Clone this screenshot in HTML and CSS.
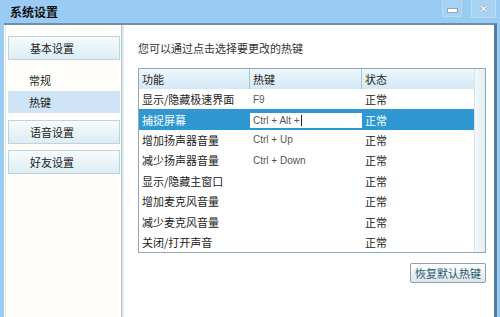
FILE: index.html
```html
<!DOCTYPE html>
<html lang="zh-CN">
  <head>
    <meta charset="UTF-8" />
    <title>系统设置</title>
    <link rel="stylesheet" href="styles.css">
  </head>
  <body>
    <div class="window">
      <div class="titlebar">
        <span class="title">系统设置</span>
        <div class="controls">
          <span class="btn btn-min"><span class="bar"></span></span>
          <span class="btn btn-close">✕</span>
        </div>
      </div>

      <div class="frame">
        <div class="sidebar">
          <div class="group">基本设置</div>
          <div class="item">常规</div>
          <div class="item active">热键</div>
          <div class="group">语音设置</div>
          <div class="group">好友设置</div>
        </div>

        <div class="content">
          <p class="hint">您可以通过点击选择要更改的热键</p>

          <div class="table">
            <div class="grid">
              <div class="row head">
                <div class="cell">功能</div>
                <div class="cell">热键</div>
                <div class="cell">状态</div>
              </div>
              <div class="row">
                <div class="cell">显示/隐藏极速界面</div>
                <div class="cell key">F9</div>
                <div class="cell">正常</div>
              </div>
              <div class="row selected">
                <div class="cell">捕捉屏幕</div>
                <div class="cell key"><span class="edit">Ctrl + Alt + <span class="caret"></span></span></div>
                <div class="cell">正常</div>
              </div>
              <div class="row">
                <div class="cell">增加扬声器音量</div>
                <div class="cell key">Ctrl + Up</div>
                <div class="cell">正常</div>
              </div>
              <div class="row">
                <div class="cell">减少扬声器音量</div>
                <div class="cell key">Ctrl + Down</div>
                <div class="cell">正常</div>
              </div>
              <div class="row">
                <div class="cell">显示/隐藏主窗口</div>
                <div class="cell key"></div>
                <div class="cell">正常</div>
              </div>
              <div class="row">
                <div class="cell">增加麦克风音量</div>
                <div class="cell key"></div>
                <div class="cell">正常</div>
              </div>
              <div class="row">
                <div class="cell">减少麦克风音量</div>
                <div class="cell key"></div>
                <div class="cell">正常</div>
              </div>
              <div class="row">
                <div class="cell">关闭/打开声音</div>
                <div class="cell key"></div>
                <div class="cell">正常</div>
              </div>
            </div>
            <div class="scrollbar"></div>
          </div>

          <div class="actions">
            <button class="reset">恢复默认热键</button>
          </div>
        </div>
      </div>
    </div>
  </body>
</html>
```

FILE: styles.css
```css
:root {
  --sky: #99cbf3;
  --frame-dark: #5a7b98;
  --select: #2f98d3;
  --text: #222;
}

body {
  margin: 0;
  font-family: "Noto Sans CJK SC", "Noto Sans", sans-serif;
  font-size: 11px;
  color: var(--text);
}

.window {
  width: 500px;
  height: 317px;
  background: var(--sky);
  display: flex;
  flex-direction: column;
  overflow: hidden;
}

/* Title bar */
.titlebar {
  height: 23px;
  flex-shrink: 0;
  display: flex;
  align-items: center;
  justify-content: space-between;
  padding-left: 10px;
}

.title {
  font-size: 12px;
  font-weight: bold;
  color: #111;
}

.controls {
  align-self: flex-start;
  display: flex;
  gap: 9px;
  margin-right: 4px;
}

.btn {
  display: flex;
  align-items: center;
  justify-content: center;
  background: #a8d2f1;
  border: 1px solid #b9dcf5;
  border-top: none;
}

.btn-min {
  width: 18px;
  height: 16px;
}

.btn-min .bar {
  width: 9px;
  height: 3px;
  margin-top: 4px;
  background: #fff;
  box-shadow: 0 0 0 1px #8aa8bf;
}

.btn-close {
  width: 23px;
  height: 17px;
  color: #fff;
  font-size: 12px;
  font-family: "DejaVu Sans", sans-serif;
  text-shadow: 0 0 1px #6f8aa0, 0 0 1px #6f8aa0;
}

/* Window body */
.frame {
  flex: 1;
  display: flex;
  margin: 0 3px 0 4px;
  background: #fff;
  border-top: 2px solid #6f8ea8;
  border-right: 3px solid var(--frame-dark);
}

.sidebar {
  box-sizing: border-box;
  width: 117px;
  margin-left: 1px;
  padding: 11px 1px 0 2px;
  border-left: 1px solid #e3eaef;
  border-right: 1px solid #b7c3cc;
  box-shadow: 2px 0 0 #dcebf5;
  background: #fffefb;
}

.group {
  height: 24px;
  box-sizing: border-box;
  display: flex;
  align-items: center;
  padding-left: 21px;
  border: 1px solid #bcd4de;
  background: linear-gradient(#f6fbfd, #dcedf3);
  margin-bottom: 6px;
}

.group:first-child {
  margin-bottom: 9px;
}

.item {
  height: 22px;
  display: flex;
  align-items: center;
  padding-left: 21px;
}

.item.active {
  background: #cfe4f6;
  margin-bottom: 7px;
}

.content {
  flex: 1;
  padding: 0 8px 0 16px;
}

.hint {
  margin: 16px 0 13px;
  line-height: 14px;
  color: #333;
}

/* Hotkey table */
.table {
  display: flex;
  height: 183px;
  border: 1px solid #8fa8b6;
}

.grid {
  flex: 1;
}

.row {
  display: grid;
  grid-template-columns: 111px 112px 1fr;
  height: 20.4px;
  align-items: center;
}

.row.head {
  height: 20px;
  background: linear-gradient(#eef7fc, #d3e8f5);
}

.row.head .cell {
  border-right: 1px solid #a9c4d6;
  height: 100%;
  display: flex;
  align-items: center;
}

.row.head .cell:last-child {
  border-right: none;
}

.cell {
  padding-left: 3px;
  white-space: nowrap;
}

.key {
  font-family: "Liberation Sans", sans-serif;
  font-size: 10px;
  color: #555;
}

.row.selected {
  background: var(--select);
  color: #fff;
}

.row.selected .key {
  padding-left: 0;
  height: 100%;
  display: flex;
  align-items: center;
}

.edit {
  box-sizing: border-box;
  width: 112px;
  height: 15px;
  margin-top: 1px;
  padding-left: 3px;
  background: #fff;
  color: #555;
  display: flex;
  align-items: center;
}

.caret {
  width: 1px;
  height: 11px;
  margin-left: 1px;
  background: #222;
}

.scrollbar {
  width: 10px;
  background: linear-gradient(90deg, #f3f8fb, #e4eef5);
  border-left: 1px solid #d7e4ec;
}

.actions {
  display: flex;
  justify-content: flex-end;
  margin-top: 10px;
}

.reset {
  height: 20px;
  width: 76px;
  padding: 0;
  font-family: "Noto Sans CJK SC", sans-serif;
  font-size: 11px;
  color: #1c5870;
  background: linear-gradient(#ffffff, #dde5ea);
  border: 1px solid #8ea3b0;
  border-radius: 2px;
}
```
